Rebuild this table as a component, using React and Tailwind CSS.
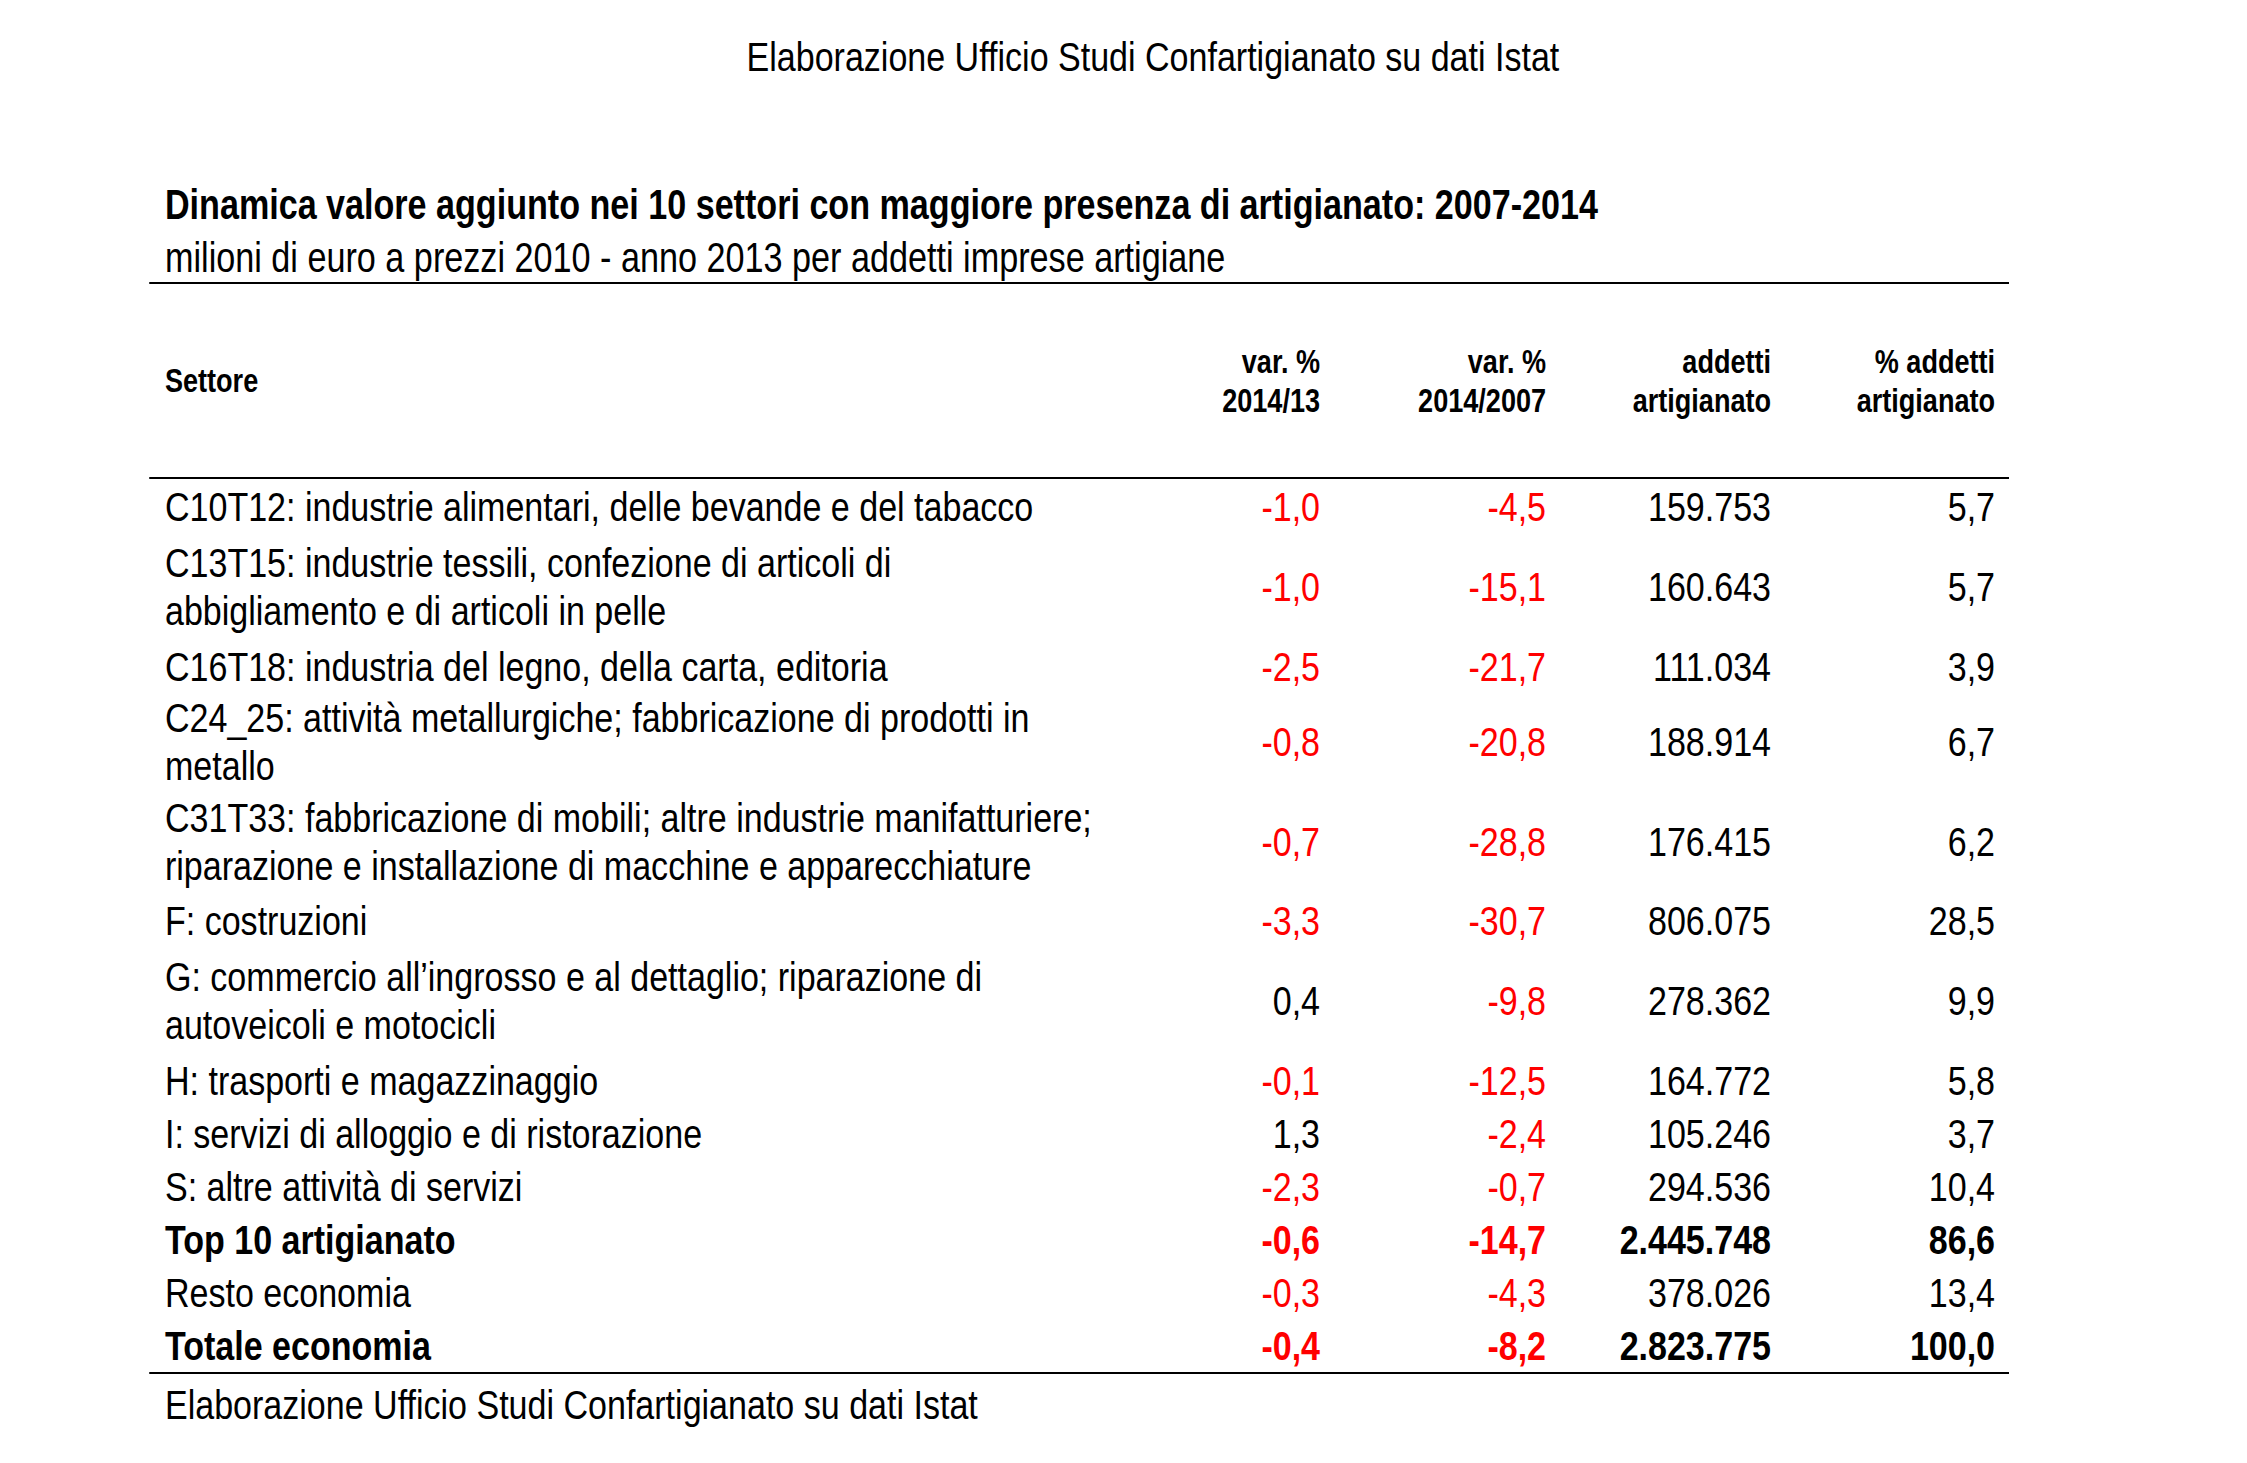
const rows = [
  { l: ["C10T12: industrie alimentari, delle bevande e del tabacco"], a: "-1,0", b: "-4,5", c: "159.753", d: "5,7", h: "h-[55px]" },
  { l: ["C13T15: industrie tessili, confezione di articoli di", "abbigliamento e di articoli in pelle"], a: "-1,0", b: "-15,1", c: "160.643", d: "5,7", h: "h-[105px]" },
  { l: ["C16T18: industria del legno, della carta, editoria"], a: "-2,5", b: "-21,7", c: "111.034", d: "3,9", h: "h-[55px]" },
  { l: ["C24_25: attività metallurgiche; fabbricazione di prodotti in", "metallo"], a: "-0,8", b: "-20,8", c: "188.914", d: "6,7", h: "h-[95px]" },
  { l: ["C31T33: fabbricazione di mobili; altre industrie manifatturiere;", "riparazione e installazione di macchine e apparecchiature"], a: "-0,7", b: "-28,8", c: "176.415", d: "6,2", h: "h-[105px]" },
  { l: ["F: costruzioni"], a: "-3,3", b: "-30,7", c: "806.075", d: "28,5", h: "h-[53px]" },
  { l: ["G: commercio all’ingrosso e al dettaglio; riparazione di", "autoveicoli e motocicli"], a: "0,4", b: "-9,8", c: "278.362", d: "9,9", h: "h-[107px]" },
  { l: ["H: trasporti e magazzinaggio"], a: "-0,1", b: "-12,5", c: "164.772", d: "5,8", h: "h-[53px]" },
  { l: ["I: servizi di alloggio e di ristorazione"], a: "1,3", b: "-2,4", c: "105.246", d: "3,7", h: "h-[53px]" },
  { l: ["S: altre attività di servizi"], a: "-2,3", b: "-0,7", c: "294.536", d: "10,4", h: "h-[53px]" },
  { l: ["Top 10 artigianato"], a: "-0,6", b: "-14,7", c: "2.445.748", d: "86,6", h: "h-[53px]", bold: true },
  { l: ["Resto economia"], a: "-0,3", b: "-4,3", c: "378.026", d: "13,4", h: "h-[53px]" },
  { l: ["Totale economia"], a: "-0,4", b: "-8,2", c: "2.823.775", d: "100,0", h: "h-[53px]", bold: true },
];

const neg = (v) => (v.startsWith("-") ? "text-[#ff0000]" : "text-black");

export default function App() {
  return (
    <div className="min-h-screen w-[2247px] overflow-hidden bg-white">
      {/* Arial Narrow non c'è: Liberation Sans compresso all'82% */}
      <div className="w-[2740px] origin-top-left scale-x-[0.82] text-black font-['Liberation_Sans','Arial',sans-serif] text-[41.5px] leading-[48px]">
        <div className="pt-[33px] pl-[72px] text-center">Elaborazione Ufficio Studi Confartigianato su dati Istat</div>

        <div className="ml-[181.7px] mt-[100px] w-[2268.3px]">
          <div className="pl-[19.5px] font-bold text-[41.6px]">
            Dinamica valore aggiunto nei 10 settori con maggiore presenza di artigianato: 2007-2014
          </div>
          <div className="pl-[19.5px] mt-[5px] text-[41.7px]">milioni di euro a prezzi 2010 - anno 2013 per addetti imprese artigiane</div>

          <div className="grid h-[197px] grid-cols-[minmax(0,1fr)_275.6px_275.6px_274.4px_273.2px] items-center border-y-2 border-black pl-[19.5px] pr-[17px] text-[33px] leading-[39px] font-bold">
            <div>Settore</div>
            <div className="text-right">var. %<br />2014/13</div>
            <div className="text-right">var. %<br />2014/2007</div>
            <div className="text-right">addetti<br />artigianato</div>
            <div className="text-right">% addetti<br />artigianato</div>
          </div>

          <div className="border-b-2 border-black">
            {rows.map((r, i) => (
              <div
                key={i}
                className={`grid grid-cols-[minmax(0,1fr)_275.6px_275.6px_274.4px_273.2px] items-center pl-[19.5px] pr-[17px] ${r.h} ${r.bold ? "font-bold" : ""}`}
              >
                <div className="whitespace-nowrap">
                  {r.l.map((t, j) => (
                    <div key={j}>{t}</div>
                  ))}
                </div>
                <div className={`text-right ${neg(r.a)}`}>{r.a}</div>
                <div className={`text-right ${neg(r.b)}`}>{r.b}</div>
                <div className="text-right">{r.c}</div>
                <div className="text-right">{r.d}</div>
              </div>
            ))}
          </div>

          <div className="pl-[19.5px] pt-[7px]">Elaborazione Ufficio Studi Confartigianato su dati Istat</div>
        </div>
      </div>
    </div>
  );
}
